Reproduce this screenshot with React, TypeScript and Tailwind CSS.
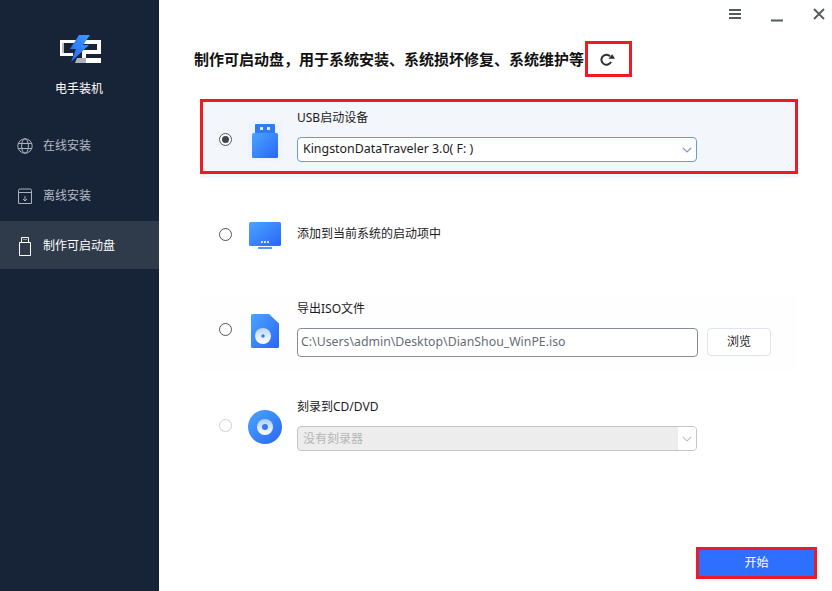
const CN = "font-['Noto_Sans','Noto_Sans_CJK_SC',sans-serif]";

function Logo() {
  return (
    <svg width="42" height="30" viewBox="0 0 42 30" className="block">
      <defs>
        <linearGradient id="bolt" x1="1" y1="0" x2="0" y2="1">
          <stop offset="0" stopColor="#3f9bff" />
          <stop offset="1" stopColor="#2468f2" />
        </linearGradient>
      </defs>
      <path d="M0 5h16v3H4v10h9v3H0z" fill="#ffffff" />
      <path d="M2 8h2v10H2z" fill="#b8bcc4" />
      <path d="M24 5h17v14H26v4h15v5H17l2-5h3v-8h15V9H24z" fill="#ffffff" />
      <path d="M17 23h9v5h-11z" fill="#aeb3bb" />
      <path d="M19 0h11l-7 10h6L11 27l5-13H10z" fill="url(#bolt)" />
    </svg>
  );
}

function Globe() {
  return (
    <svg width="16" height="16" viewBox="0 0 16 16" fill="none" stroke="#aab2bd" strokeWidth="1">
      <circle cx="8" cy="8" r="7.2" />
      <ellipse cx="8" cy="8" rx="3.4" ry="7.2" />
      <path d="M1.2 5.5h13.6M1.2 10.5h13.6" />
    </svg>
  );
}

function Archive() {
  return (
    <svg width="16" height="16" viewBox="0 0 16 16" fill="none" stroke="#aab2bd" strokeWidth="1">
      <path d="M1.5 2.5q0-1.5 1.5-1.5h10q1.500 0 1.500 1.500v13h-13z" />
      <path d="M1.500 4.500h13" />
      <path d="M8 8v5M6 11l2 2 2-2" />
    </svg>
  );
}

function UsbOutline() {
  return (
    <svg width="14" height="20" viewBox="0 0 14 20" fill="none" stroke="#ffffff" strokeWidth="1">
      <path d="M1.500 6.500h11v13h-11z" />
      <path d="M3.500 6.500v-5h7v5" />
      <path d="M5.500 3.500h1M7.500 3.500h1" />
    </svg>
  );
}

function Radio({ state, className }: { state: "on" | "off" | "disabled"; className?: string }) {
  const border = state === "disabled" ? "border-[#cfcfcf]" : "border-[#555555]";
  return (
    <span className={`flex h-[13px] w-[13px] shrink-0 items-center justify-center rounded-full border bg-white ${border} ${className ?? ""}`}>
      {state === "on" && <span className="h-[7px] w-[7px] rounded-full bg-[#444444]" />}
    </span>
  );
}

function Grad({ id }: { id: string }) {
  return (
    <linearGradient id={id} x1="0" y1="0" x2="1" y2="1">
      <stop offset="0" stopColor="#4aa5ff" />
      <stop offset="1" stopColor="#2a66f5" />
    </linearGradient>
  );
}

function UsbIcon() {
  return (
    <svg width="34" height="40" viewBox="0 0 34 40">
      <defs><Grad id="g1" /></defs>
      <rect x="0" y="0" width="34" height="40" rx="6" fill="#eaf3fe" opacity=".7" />
      <path d="M7 4a1 1 0 0 1 1-1h18a1 1 0 0 1 1 1v10H7z" fill="#2f7bf2" />
      <rect x="12" y="6" width="3" height="3" fill="#dce9ff" />
      <rect x="19" y="6" width="3" height="3" fill="#dce9ff" />
      <rect x="4" y="12" width="26" height="25" rx="1.500" fill="url(#g1)" />
    </svg>
  );
}

function MonitorIcon() {
  return (
    <svg width="34" height="30" viewBox="0 0 34 30">
      <defs><Grad id="g2" /></defs>
      <rect x="1" y="1" width="32" height="24" rx="1.500" fill="url(#g2)" />
      <rect x="13" y="20" width="2" height="2" fill="#cfe0ff" />
      <rect x="16" y="20" width="2" height="2" fill="#cfe0ff" />
      <rect x="19" y="20" width="2" height="2" fill="#cfe0ff" />
      <rect x="10" y="26" width="14" height="2" fill="#4e9cfb" />
    </svg>
  );
}

function FileDiscIcon() {
  return (
    <svg width="28" height="34" viewBox="0 0 28 34">
      <defs>
        <Grad id="g3" />
        <linearGradient id="d3" x1="0" y1="0" x2="0" y2="1">
          <stop offset="0" stopColor="#bcd6fb" />
          <stop offset="1" stopColor="#ffffff" />
        </linearGradient>
      </defs>
      <path d="M0 1.500A1.500 1.500 0 0 1 1.500 0H18l10 9.500v23a1.500 1.500 0 0 1-1.500 1.500h-25A1.500 1.500 0 0 1 0 32.500z" fill="url(#g3)" />
      <circle cx="12" cy="22" r="8" fill="url(#d3)" />
      <circle cx="12" cy="22" r="1.700" fill="#3a78ee" />
    </svg>
  );
}

function DiscIcon() {
  return (
    <svg width="34" height="34" viewBox="0 0 34 34">
      <defs>
        <Grad id="g4" />
        <linearGradient id="d4" x1="0" y1="0" x2="0" y2="1">
          <stop offset="0" stopColor="#a9cdf9" />
          <stop offset="1" stopColor="#ffffff" />
        </linearGradient>
      </defs>
      <circle cx="17" cy="17" r="17" fill="url(#g4)" />
      <circle cx="17" cy="17" r="8" fill="url(#d4)" />
      <circle cx="17" cy="17" r="3" fill="#3a78ee" />
    </svg>
  );
}

function Chevron({ color }: { color: string }) {
  return (
    <svg width="10" height="6" viewBox="0 0 10 6" fill="none" stroke={color} strokeWidth="1.200">
      <path d="M.8.800 5 5l4.200-4.200" />
    </svg>
  );
}

function NavItem({ icon, label, active }: { icon: React.ReactNode; label: string; active?: boolean }) {
  return (
    <div className={`flex h-[48px] items-center pl-[17px] pt-[2px] ${active ? "bg-[#2f3a4b] text-white" : "text-[#b3bbc6]"}`}>
      <span className="flex w-[16px] justify-center">{icon}</span>
      <span className="ml-[10px] text-[12px]">{label}</span>
    </div>
  );
}

function OptionRow({ radio, radioClass, icon, iconClass, children, className }: {
  radio: "on" | "off" | "disabled";
  radioClass?: string;
  icon: React.ReactNode;
  iconClass?: string;
  children: React.ReactNode;
  className: string;
}) {
  return (
    <div className={`flex w-[598px] items-center pl-[19px] ${className}`}>
      <Radio state={radio} className={radioClass} />
      <span className={`flex w-[65px] justify-center ${iconClass ?? ""}`}>{icon}</span>
      <div className="min-w-0 flex-1">{children}</div>
    </div>
  );
}

export default function App() {
  return (
    <div className={`flex h-[591px] w-[832px] overflow-hidden bg-white ${CN}`}>
      <aside className="flex w-[159px] shrink-0 flex-col bg-[#172336]">
        <div className="flex flex-col items-center pt-[35px]">
          <div className="pl-[2px]"><Logo /></div>
          <div className="mt-[15px] pr-[1px] text-[12px] leading-[18px] text-white">电手装机</div>
        </div>
        <nav className="mt-[23px] flex flex-col gap-[2px]">
          <NavItem icon={<Globe />} label="在线安装" />
          <NavItem icon={<Archive />} label="离线安装" />
          <NavItem icon={<UsbOutline />} label="制作可启动盘" active />
        </nav>
      </aside>

      <main className="flex min-w-0 flex-1 flex-col pl-[41px]">
        <div className="flex h-[41px] items-start justify-end gap-[30px] pr-[7px] pt-[8px]">
          <svg width="12" height="12" viewBox="0 0 12 12" fill="#555a60"><path d="M0 1h12v2H0zM0 5h12v2H0zM0 9h12v2H0z" /></svg>
          <svg width="12" height="14" viewBox="0 0 12 14" fill="#555a60"><path d="M0 11.500h12v2H0z" /></svg>
          <svg width="12" height="12" viewBox="0 0 12 12" fill="none" stroke="#555a60" strokeWidth="1.800"><path d="M1 1l10 10M11 1 1 11" /></svg>
        </div>

        <div className="flex h-[36px] items-center">
          <h1 className="-ml-[6px] text-[15px] leading-[20px] font-bold whitespace-nowrap text-[#111111]">
            制作可启动盘，用于系统安装、系统损坏修复、系统维护等
          </h1>
          <div className="ml-[1px] flex h-[36px] w-[47px] items-center justify-center border-[3px] border-[#ed1c24]">
            <svg width="15" height="13" viewBox="0 0 15 13" fill="none" stroke="#2b2f36" strokeWidth="2" className="mt-[1px] -ml-[3px]">
              <path d="M11 8.800A5 5 0 1 1 10 3.200" />
              <path d="M8.500 5.800H15L12.200 1.200z" fill="#2b2f36" stroke="none" />
            </svg>
          </div>
        </div>

        <div className="mt-[22px] flex flex-col gap-[24px] text-[12px] text-[#1b1b1b]">
          <div className="-mb-[4px] w-[598px] bg-[#f3f6fb] pb-[4px]">
            <OptionRow radio="on" radioClass="mt-[5px]" icon={<UsbIcon />} iconClass="mt-[9px]" className="h-[75px] border-[3px] border-[#ed1c24] !pl-[16px]">
              <div className="mb-[10px] -mt-[2px] leading-[18px]">USB启动设备</div>
              <div className="flex h-[25px] w-[400px] items-center justify-between rounded-[4px] border border-[#6f97d4] bg-white pl-[5px] pr-[4px]">
                <span className="text-[12.400px]">KingstonDataTraveler 3.0( F: )</span>
                <Chevron color="#6f97d4" />
              </div>
            </OptionRow>
          </div>

          <OptionRow radio="off" icon={<MonitorIcon />} iconClass="mt-[3px]" className="h-[74px] pb-[2px]">
            <div className="-mt-[1px] leading-[18px]">添加到当前系统的启动项中</div>
          </OptionRow>

          <OptionRow radio="off" radioClass="mt-[2px]" icon={<FileDiscIcon />} iconClass="mt-[6px]" className="h-[75px] bg-[#fefefe] pb-[11px]">
            <div className="leading-[18px]">导出ISO文件</div>
            <div className="mt-[10px] flex items-center">
              <div className="flex h-[29px] w-[401px] items-center rounded-[4px] border border-[#858c97] bg-white pl-[3px] text-[12.300px] text-[#666d77]">
                C:\Users\admin\Desktop\DianShou_WinPE.iso
              </div>
              <button className="ml-[9px] h-[28px] w-[64px] rounded-[4px] border border-[#dde4ec] bg-white text-[12px] text-[#1b1b1b]">浏览</button>
            </div>
          </OptionRow>

          <OptionRow radio="disabled" radioClass="mt-[2px]" icon={<DiscIcon />} iconClass="mt-[5px]" className="h-[64px] pb-[5px]">
            <div className="leading-[18px]">刻录到CD/DVD</div>
            <div className="mt-[10px] flex h-[25px] w-[400px] items-center justify-between rounded-[4px] border border-[#c4c4c4] bg-[#ededed] pl-[5px]">
              <span className="text-[12px] text-[#b5b5b5]">没有刻录器</span>
              <span className="flex h-[23px] w-[18px] items-center justify-center rounded-r-[3px] bg-white"><Chevron color="#c4c4c4" /></span>
            </div>
          </OptionRow>
        </div>

        <div className="mt-auto mb-[12px] flex justify-end pr-[15px]">
          <button className="h-[32px] w-[121px] border-[3px] border-[#ed1c24] bg-[#2f6fff] text-[12px] text-white">开始</button>
        </div>
      </main>
    </div>
  );
}
